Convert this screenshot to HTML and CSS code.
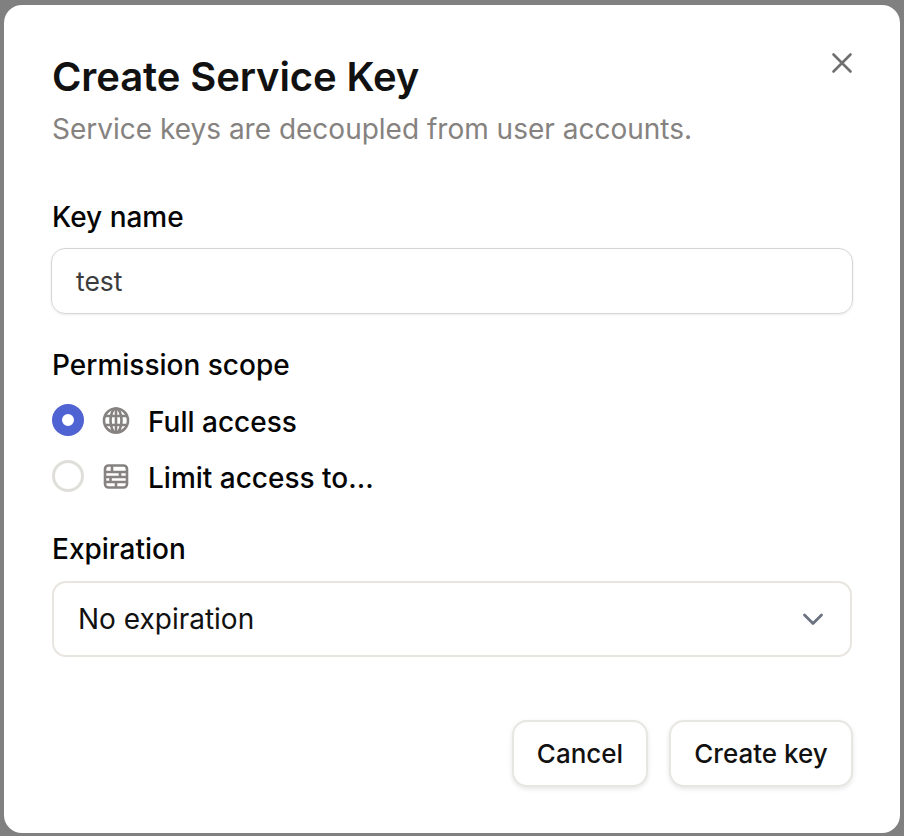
FILE: index.html
```html
<!DOCTYPE html>
<html lang="en">
<head>
<meta charset="utf-8">
<title>Create Service Key</title>
<link rel="stylesheet" href="styles.css">
</head>
<body>
<main class="dialog">
  <button class="close" aria-label="Close">
    <svg width="24" height="24" viewBox="0 0 24 24" fill="none" stroke="#6f6f6f" stroke-width="2.6" stroke-linecap="round"><path d="M3.500 3.500L20.500 20.500M20.500 3.500L3.500 20.500"/></svg>
  </button>
  <h1 class="title">Create Service Key</h1>
  <p class="subtitle">Service keys are decoupled from user accounts.</p>

  <label class="label label-name">Key name</label>
  <div class="input">test</div>

  <div class="label label-scope">Permission scope</div>
  <div class="options">
    <div class="option">
      <span class="radio radio-on"></span>
      <svg class="opt-icon" width="30" height="30" viewBox="0 0 30 30" fill="none" stroke="#858280" stroke-width="2.600"><circle cx="15" cy="15.500" r="12"/><ellipse cx="15" cy="15.500" rx="5.500" ry="12"/><path d="M4 11H26M4 20H26M15 3.500V27.500"/></svg>
      <span class="opt-text">Full access</span>
    </div>
    <div class="option">
      <span class="radio"></span>
      <svg class="opt-icon" width="30" height="30" viewBox="0 0 30 30" fill="none" stroke="#858280" stroke-width="2.600"><rect x="4" y="4.500" width="22" height="22" rx="3.500"/><path d="M4 11H26M4 16H26M4 21H26M11 4.500V11M19 11V16M9.500 16V21M15 21V26.500"/></svg>
      <span class="opt-text">Limit access to...</span>
    </div>
  </div>

  <div class="label label-exp">Expiration</div>
  <div class="select">
    <span>No expiration</span>
    <svg width="24" height="24" viewBox="0 0 24 24" fill="none" stroke="#6b7280" stroke-width="2.800" stroke-linecap="round" stroke-linejoin="round"><path d="M3.500 8L12 16.500L20.500 8"/></svg>
  </div>

  <div class="actions">
    <button class="btn btn-cancel">Cancel</button>
    <button class="btn btn-create">Create key</button>
  </div>
</main>
</body>
</html>
```
FILE: styles.css
```css
html, body {
  margin: 0;
  height: 836px;
  overflow: hidden;
  background: #808080;
  font-family: Inter, "Liberation Sans", sans-serif;
}
body {
  padding: 5px 4px 3px;
  box-sizing: border-box;
}
.dialog {
  position: relative;
  box-sizing: border-box;
  height: 828px;
  background: #fff;
  border-radius: 18px;
  padding: 48px 48px 0;
  display: flex;
  flex-direction: column;
  align-items: stretch;
}
.close {
  position: absolute;
  top: 46px;
  right: 46px;
  width: 24px;
  height: 24px;
  padding: 0;
  border: 0;
  background: none;
  display: flex;
}
.title {
  margin: 0;
  font-size: 40px;
  line-height: 48px;
  font-weight: 600;
  color: #111;
  letter-spacing: -0.1px;
}
.subtitle {
  margin: 10px 0 0;
  font-size: 28px;
  line-height: 36px;
  color: #858280;
}
.label {
  font-size: 28px;
  line-height: 36px;
  font-weight: 500;
  color: #050505;
}
.label-name { margin-top: 52px; }
.input {
  box-sizing: border-box;
  margin: 13px 0 0 -1px;
  width: 802px;
  height: 66px;
  border: 1px solid #d8d4d2;
  border-radius: 14px;
  padding: 0 24px;
  display: flex;
  align-items: center;
  font-size: 26.5px;
  color: #3c3c3c;
  box-shadow: 0 1px 3px rgba(0,0,0,.08);
}
.label-scope { margin-top: 33px; }
.options {
  margin-top: 21px;
  display: flex;
  flex-direction: column;
  gap: 24px;
}
.option {
  display: flex;
  align-items: center;
  height: 32px;
}
.radio {
  box-sizing: border-box;
  width: 32px;
  height: 32px;
  border-radius: 50%;
  border: 3px solid #e0dedb;
}
.radio-on {
  border: 10px solid #4f63d2;
  background: #fff;
}
.opt-icon { margin-left: 17px; }
.opt-text {
  margin-left: 17px;
  padding-top: 3px;
  font-size: 28px;
  font-weight: 500;
  color: #050505;
}
.label-exp { margin-top: 39px; }
.select {
  box-sizing: border-box;
  margin-top: 14px;
  width: 800px;
  height: 76px;
  border: 2px solid #e8e5e1;
  border-radius: 14px;
  padding: 0 25px 0 25px;
  display: flex;
  align-items: center;
  justify-content: space-between;
  font-size: 28px;
  color: #111;
}
.select span { margin-left: -1px; }
.actions {
  margin-top: 63px;
  margin-right: -1px;
  display: flex;
  justify-content: flex-end;
  gap: 21px;
}
.btn {
  box-sizing: border-box;
  height: 67px;
  background: #fff;
  border: 2px solid #e8e6e3;
  border-radius: 15px;
  font-family: inherit;
  font-size: 26px;
  font-weight: 500;
  color: #111;
  box-shadow: 0 2px 5px rgba(0,0,0,.1);
}
.btn-cancel { width: 136px; }
.btn-create { width: 184px; }
```
